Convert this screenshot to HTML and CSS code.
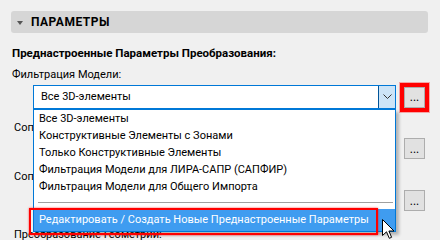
FILE: index.html
```html
<!DOCTYPE html>
<html lang="ru">
<head>
    <meta charset="UTF-8">
    <title>Параметры</title>
    <link rel="stylesheet" href="styles.css">
</head>
<body>
    <div class="panel">
        <div class="section-header">
            <span class="caret"></span>
            <span class="section-title">ПАРАМЕТРЫ</span>
        </div>

        <div class="preset-title">Преднастроенные Параметры Преобразования:</div>

        <div class="field-label">Фильтрация Модели:</div>
        <div class="field-row">
            <div class="combo">
                <span class="combo-value">Все 3D-элементы</span>
                <span class="combo-arrow">
                    <svg width="9" height="6" viewBox="0 0 9 6"><path d="M0.5 0.5 L4.5 4.5 L8.5 0.5" fill="none" stroke="#333" stroke-width="1"/></svg>
                </span>
                <div class="combo-list">
                    <div class="combo-item">Все 3D-элементы</div>
                    <div class="combo-item">Конструктивные Элементы с Зонами</div>
                    <div class="combo-item">Только Конструктивные Элементы</div>
                    <div class="combo-item">Фильтрация Модели для ЛИРА-САПР (САПФИР)</div>
                    <div class="combo-item">Фильтрация Модели для Общего Импорта</div>
                    <div class="combo-separator"></div>
                    <div class="combo-item selected">Редактировать / Создать Новые Преднастроенные Параметры</div>
                </div>
                <div class="callout"></div>
            </div>
            <button class="dots-btn marked">...</button>
        </div>

        <div class="field-label label-second">Сопоставление Слоев:</div>
        <div class="field-row row-small">
            <div class="combo combo-plain"></div>
            <button class="dots-btn">...</button>
        </div>

        <div class="field-label label-third">Сопоставление Материалов:</div>
        <div class="field-row row-small row-third">
            <div class="combo combo-plain"></div>
            <button class="dots-btn">...</button>
        </div>

        <div class="field-label label-fourth">Преобразование Геометрии:</div>
    </div>

    <!-- указатель мыши -->
    <svg class="cursor" width="13" height="21" viewBox="0 0 13 21">
        <path d="M0.5 0.5 L0.5 16.5 L4.5 12.8 L7.3 19.3 L9.6 18.3 L6.9 12 L12 12 Z" fill="#fff" stroke="#000" stroke-width="1" stroke-linejoin="round"/>
    </svg>
</body>
</html>
```

FILE: styles.css
```css
* {
    margin: 0;
    padding: 0;
    box-sizing: border-box;
    font-family: Roboto, "Liberation Sans", Arial, sans-serif;
}

body {
    background-color: #f0f0f0;
    color: #000;
    font-size: 11px;
    overflow: hidden;
}

.panel {
    padding: 11px 12px 0 11px;
}

.section-header {
    display: flex;
    align-items: center;
    height: 22px;
    padding-left: 6px;
    background-color: #d6d6d6;
    border-radius: 3px;
}

.caret {
    width: 0;
    height: 0;
    border-left: 3.5px solid transparent;
    border-right: 3.5px solid transparent;
    border-top: 4px solid #555;
    margin-top: 1px;
}

.section-title {
    margin-left: 8px;
    font-size: 12px;
    font-weight: bold;
    letter-spacing: 0.5px;
    line-height: 16px;
}

.preset-title {
    margin-top: 12px;
    padding-left: 1px;
    font-size: 11.5px;
    font-weight: bold;
    line-height: 16px;
}

.field-label {
    margin-top: 6px;
    padding-left: 1px;
    line-height: 16px;
    white-space: nowrap;
}

.label-second {
    margin-top: 11px;
    padding-left: 3px;
}

.label-third {
    margin-top: 10px;
    padding-left: 3px;
}

.label-fourth {
    margin-top: 16px;
    padding-left: 3px;
}

.field-row {
    display: flex;
    align-items: center;
    gap: 8px;
    margin-top: 2px;
    padding-left: 22px;
    padding-right: 3px;
}

.row-small {
    height: 21px;
}

.row-third {
    margin-top: 5px;
}

.combo {
    position: relative;
    flex: 1;
    display: flex;
    align-items: stretch;
    height: 24px;
    background-color: white;
    border: 1px solid #0078d7;
}

.combo-plain {
    height: 21px;
    border-color: #7a7a7a;
}

.combo-value {
    flex: 1;
    padding-left: 7px;
    line-height: 22px;
}

.combo-arrow {
    display: flex;
    align-items: center;
    justify-content: center;
    width: 17px;
    background-color: #cce4f7;
    border-left: 1px solid #005499;
}

.combo-list {
    position: absolute;
    left: -1px;
    right: -1px;
    top: 23px;
    z-index: 2;
    background-color: white;
    border: 1px solid #0078d7;
    box-shadow: 3px 3px 3px rgba(0,0,0,0.25);
}

.combo-item {
    height: 17px;
    line-height: 17px;
    padding-left: 5px;
    white-space: nowrap;
}

.combo-separator {
    height: 1px;
    margin: 7px 2px 6px 4px;
    background-color: #a0a0a0;
}

.combo-item.selected {
    height: 22px;
    line-height: 22px;
    background-color: #3f9cf0;
    color: white;
}

.callout {
    position: absolute;
    left: -5px;
    top: 122px;
    width: 349px;
    height: 27px;
    z-index: 3;
    border: 2px solid #ff0000;
    box-shadow: 0 0 2px rgba(255,0,0,0.7);
}

.dots-btn {
    width: 21px;
    height: 21px;
    background-color: #e1e1e1;
    border: 1px solid #adadad;
    font-size: 12px;
    line-height: 14px;
    color: #000;
}

.dots-btn.marked {
    outline: 2px solid #ff0000;
    outline-offset: 2px;
    box-shadow: 0 0 0 4px #ff0000, 0 0 0 5px rgba(255,0,0,0.3);
}

.cursor {
    position: absolute;
    left: 382px;
    top: 219px;
    z-index: 5;
}
```
